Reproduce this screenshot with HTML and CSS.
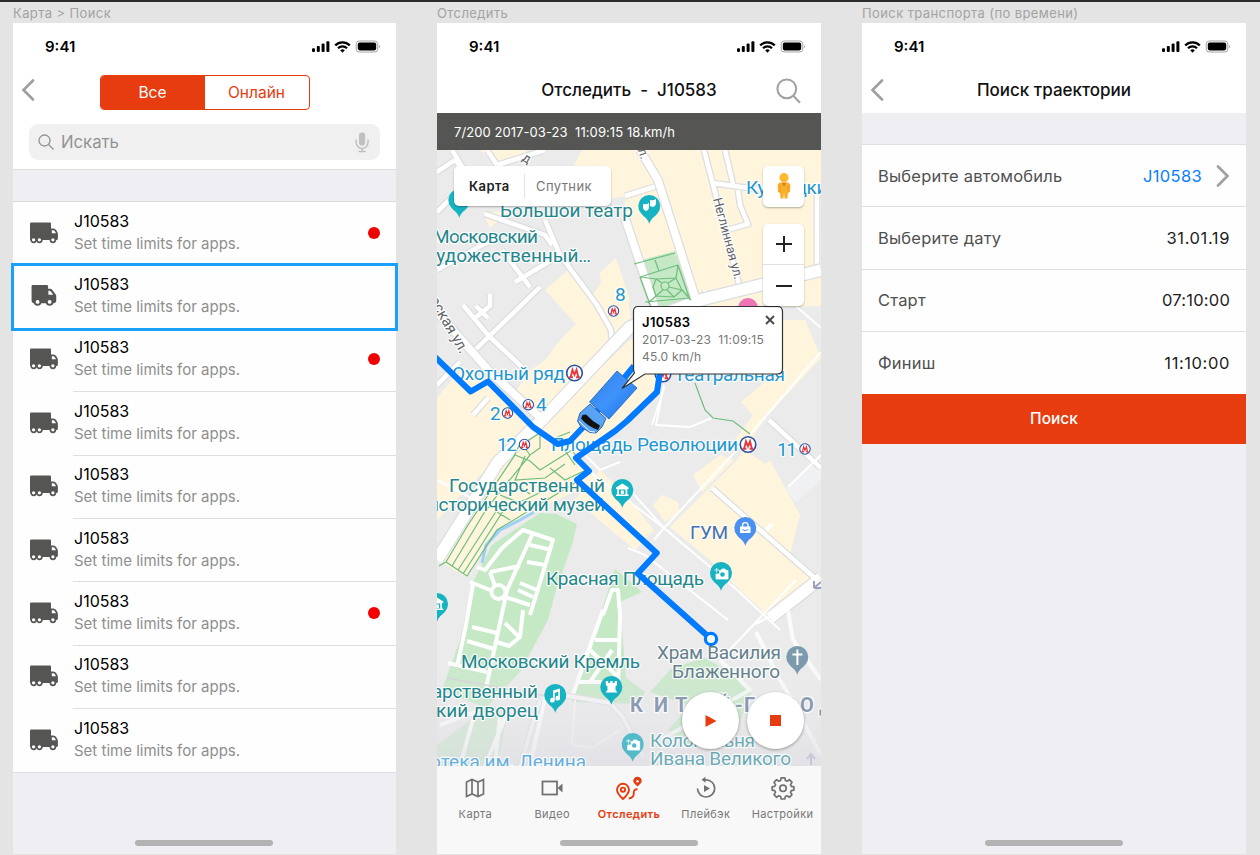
FILE: index.html
```html
<!DOCTYPE html>
<html lang="ru">
<head>
<meta charset="utf-8">
<title>Трекинг транспорта</title>
<link rel="stylesheet" href="styles.css">
</head>
<body>
<svg width="0" height="0" class="defs">
  <defs>
    <symbol id="status" viewBox="0 0 69 14">
      <rect x="0" y="8.3" width="3" height="3.7" rx="1"/><rect x="4.8" y="6" width="3" height="6" rx="1"/><rect x="9.6" y="3.6" width="3" height="8.4" rx="1"/><rect x="14.4" y="1.2" width="3" height="10.8" rx="1"/>
      <path d="M23.2 5.4a10.2 10.2 0 0 1 14.6 0" fill="none" stroke="#000" stroke-width="2.3"/>
      <path d="M26 8.3a6.3 6.3 0 0 1 9 0" fill="none" stroke="#000" stroke-width="2.1"/>
      <path d="M28.2 10.3a3.4 3.4 0 0 1 4.6 0L30.500 12.700z"/>
      <rect x="44.200" y="1" width="21.600" height="11" rx="3" fill="none" stroke="#a5a5a5"/>
      <rect x="45.800" y="2.600" width="18.400" height="7.800" rx="1.800"/>
      <path d="M67 5v3.200q1-.6 1-1.600t-1-1.600z" fill="#a5a5a5"/>
    </symbol>
    <symbol id="back" viewBox="0 0 14 22"><path d="M12 1.500 2.500 11 12 20.500" fill="none" stroke="#a0a0a0" stroke-width="2.700" stroke-linecap="round"/></symbol>
    <symbol id="truck" viewBox="0 0 28 21">
      <path fill="#555653" d="M1.200 0H20q1 0 1 1v5h2.200q2 0 3.100 1.800l1 1.800q.6 1 .6 2.200V16q0 1.500-1.500 1.500H1.500Q0 17.500 0 16V1.200Q0 0 1.200 0z"/>
      <g fill="#fff" stroke="#555653" stroke-width="1.700"><circle cx="3.600" cy="17.300" r="2.500"/><circle cx="9.400" cy="17.300" r="2.500"/><circle cx="22.900" cy="17.300" r="2.500"/></g>
      <path fill="#fff" d="M21.800 7.800h1.600q.8 0 1.300.8l1.300 2.200h-4.200z"/>
    </symbol>
    <symbol id="van" viewBox="0 0 28 23">
      <path fill="#555653" d="M2.400 0H17q1.300 0 1.300 1.300V4h2.200q1.300 0 2.200 1.100l3.200 4.200q.9 1 .9 2.300V16q0 3-3 3H4q-3 0-3-3V1.400Q1 0 2.400 0z"/>
      <g fill="#fff" stroke="#555653" stroke-width="2"><circle cx="7.300" cy="17.700" r="3"/><circle cx="19.900" cy="17.700" r="3"/></g>
      <path fill="#fff" d="M18.600 6h1.300q.7 0 1.200.7l2.500 3.400h-5z"/>
    </symbol>
    <symbol id="metro" viewBox="-9 -9 18 18" overflow="visible"><circle r="7.800" fill="#fff" stroke="#2a50a0" stroke-width="1.600"/><path d="M-5.300 4.200H-1.600M1.600 4.200H5.300M-3.800 4 -2 -3.200 0 1.800 2 -3.200 3.800 4" fill="none" stroke="#e8373b" stroke-width="1.900"/></symbol>
    <path id="pin" d="M0 18C-1.500 12.500-5 11.500-8.300 7.300A11 11 0 1 1 8.300 7.300C5 11.500 1.500 12.500 0 18z"/>
  </defs>
</svg>
<div class="board">
  <section class="frame">
    <h2 class="frame-label">Карта &gt; Поиск</h2>
    <div class="screen">
      <div class="status"><span>9:41</span><svg class="status-icons"><use href="#status"/></svg></div>
      <div class="nav nav-tabs">
        <svg class="back"><use href="#back"/></svg>
        <div class="segment"><span class="seg on">Все</span><span class="seg">Онлайн</span></div>
      </div>
      <div class="search-wrap"><div class="search">
        <svg width="17" height="17" viewBox="0 0 17 17" fill="none" stroke="#929292" stroke-width="1.300"><circle cx="6.500" cy="6.500" r="5.500"/><path d="M10.500 10.500l5 5"/></svg>
        <span>Искать</span>
        <svg width="14" height="21" viewBox="0 0 14 21"><rect x="4" y=".5" width="6.200" height="13" rx="3.100" fill="#c0c0c3"/><path d="M1.200 7.500v3a5.900 5.900 0 0 0 11.800 0v-3M7.100 16.500v3M3.500 19.600h7.200" fill="none" stroke="#c0c0c3" stroke-width="1.500"/></svg>
      </div></div>
      <ul class="list">
        <li class="item"><svg class="truck"><use href="#truck"/></svg><div class="txt"><b>J10583</b><span>Set time limits for apps.</span></div><i class="dot"></i></li>
        <li class="item selected"><svg class="truck"><use href="#van"/></svg><div class="txt"><b>J10583</b><span>Set time limits for apps.</span></div></li>
        <li class="item"><svg class="truck"><use href="#truck"/></svg><div class="txt"><b>J10583</b><span>Set time limits for apps.</span></div><i class="dot"></i></li>
        <li class="item"><svg class="truck"><use href="#truck"/></svg><div class="txt"><b>J10583</b><span>Set time limits for apps.</span></div></li>
        <li class="item"><svg class="truck"><use href="#truck"/></svg><div class="txt"><b>J10583</b><span>Set time limits for apps.</span></div></li>
        <li class="item"><svg class="truck"><use href="#truck"/></svg><div class="txt"><b>J10583</b><span>Set time limits for apps.</span></div></li>
        <li class="item"><svg class="truck"><use href="#truck"/></svg><div class="txt"><b>J10583</b><span>Set time limits for apps.</span></div><i class="dot"></i></li>
        <li class="item"><svg class="truck"><use href="#truck"/></svg><div class="txt"><b>J10583</b><span>Set time limits for apps.</span></div></li>
        <li class="item"><svg class="truck"><use href="#truck"/></svg><div class="txt"><b>J10583</b><span>Set time limits for apps.</span></div></li>
      </ul>
      <div class="home"></div>
    </div>
  </section>

  <section class="frame wide">
    <h2 class="frame-label">Отследить</h2>
    <div class="screen">
      <div class="status"><span>9:41</span><svg class="status-icons"><use href="#status"/></svg></div>
      <div class="nav">
        <h1>Отследить&nbsp; -&nbsp; J10583</h1>
        <svg class="find" width="25" height="26" viewBox="0 0 25 26" fill="none" stroke="#a0a0a0" stroke-width="2"><circle cx="10.800" cy="10.800" r="9.400"/><path d="M17.300 17.800l6.700 7"/></svg>
      </div>
      <div class="info">7/200 2017-03-23&nbsp; 11:09:15 18.km/h</div>
      <div class="map">
        <svg class="map-svg" viewBox="437 150 384 616" width="384" height="616">
          <defs>
            <linearGradient id="shade" x1="0" y1="0" x2="0" y2="1"><stop offset="0" stop-color="#eeeef2" stop-opacity="0"/><stop offset="1" stop-color="#dcdce3" stop-opacity=".6"/></linearGradient>
            <linearGradient id="cargo" x1="0" y1="0" x2="1" y2="1"><stop offset="0" stop-color="#2f7fe8"/><stop offset=".5" stop-color="#3f93fb"/><stop offset="1" stop-color="#1670e6"/></linearGradient>
          </defs>
          <rect x="437" y="150" width="384" height="616" fill="#ebebeb"/>
          <g fill="#fef5dc">
            <path d="M582 150H821V306L700 310 637 260 622 220 626 196 602 200 590 186 572 170z"/>
            <path d="M480 150H525L531 156 500 167 488 158z"/>
            <path d="M437 398 463 367 492 388 540 428 500 463 437 500z"/>
            <path d="M437 480 470 455 500 455 437 520z"/>
            <path d="M545 290 568 270 590 300 615 258 628 300 632 326 540 422 514 395 528 372 545 360 560 340 576 324z"/>
            <path d="M630 340 660 330V390L627 424 577 456 600 480 540 508 495 530 467 577 440 562 500 460 560 405z"/>
            <path d="M600 272 616 258 630 300 604 320z"/>
            <path d="M483 213 510 210 490 228z"/>
            <path d="M690 320H805L821 358 768 415 735 462 670 527 710 560 742 592 768 615 818 580 790 555 800 515 768 490 775 470 752 455 735 440 753 415 741 402 772 376 720 345z"/>
            <path d="M693 475 720 455 734 460 702 492z"/><path d="M653 505 662 495 678 502 680 512 665 522z"/>
            <path d="M600 470 630 500 654 530 635 550 575 500z"/><path d="M758 610H782L770 617z"/>
            <path d="M740 487 770 460 800 515 785 545z"/>
          </g>
          <path d="M625 215 640 265 652 312H634L612 240z" fill="#ebebeb"/>
          <path d="M785 489 813 463 821 468V480L796 502z" fill="#eff1f3"/>
          <g fill="#c5e8c5">
            <path d="M634 262 675 251 693 302 652 312z"/>
            <path d="M540 513 556 514 577 524 572 545 556 590 548 620 520 672 486 708 442 690 460 640 474 580 492 545z"/>
            <path d="M437 745 490 705 508 712 497 766H437z" opacity=".8"/>
            <path d="M615 569 642 592 620 602 626 678 645 692 640 704 572 702 598 622z"/>
            <path d="M650 692 672 668 705 658 735 675 752 690 735 735 690 748 668 730 690 706z"/>
          </g>
          <path d="M482 563 486 545 500 530 520 520 534 512" fill="none" stroke="#9fd0f5" stroke-width="3"/>
          <g fill="none" stroke-linejoin="round">
            <g stroke="#dcdde0" stroke-width="7">
              <path d="M437 172 455 160M437 212 470 180 452 150M455 160 478 190M487 150 497 165M497 165 545 150M437 270 495 238M502 250 530 287M485 214 545 235 552 245M515 282 560 255"/>
              <path d="M476 306 488 318M490 294V306L475 318M463 305 488 335 525 370M475 350 540 287M437 385 460 362M473 415 488 398"/>
              <path d="M545 220 560 255 597 305 611 330 612 345M704 150 742 296M725 150 733 184M713 183 762 190M738 190 740 205 748 224 727 230M817 190V275M625 196 657 186M705 300V290"/>
            </g>
            <g stroke="#fff" stroke-width="4.500">
              <path d="M437 172 455 160M437 212 470 180 452 150M455 160 478 190M487 150 497 165M497 165 545 150M437 270 495 238M502 250 530 287M485 214 545 235 552 245M515 282 560 255"/>
              <path d="M476 306 488 318M490 294V306L475 318M463 305 488 335 525 370M475 350 540 287M437 385 460 362M473 415 488 398"/>
              <path d="M545 220 560 255 597 305 611 330 612 345M704 150 742 296M725 150 733 184M713 183 762 190M738 190 740 205 748 224 727 230M817 190V275M625 196 657 186M705 300V290"/>
            </g>
            <g stroke="#dcdde0"><path stroke-width="10" d="M640 150 658 180 697 303M437 312 490 372 545 422M625 218 655 308"/><path stroke-width="14" d="M821 270 700 300 630 327 540 422 498 462 437 560M821 578 770 618"/><path stroke-width="7" d="M712 488 826 588M769 420 821 468"/></g>
            <g stroke="#fff"><path stroke-width="7.500" d="M640 150 658 180 697 303M437 312 490 372 545 422M625 218 655 308"/><path stroke-width="11.500" d="M821 270 700 300 630 327 540 422 498 462 437 560M821 578 770 618"/><path stroke-width="4.500" d="M712 488 826 588M766 530 772 524M769 420 821 468"/></g>
            <g stroke="#fff" stroke-width="2"><path d="M788 487 821 455M821 352 735 452 664 528 654 540M577 462 664 528 735 588 780 630M630 490 664 528M628 548 645 555 728 620M437 480 475 500M598 478 560 445M664 385 656 425 690 427 712 418M766 280 821 328M652 425 664 388M570 440 600 470 620 462"/><path d="M720 660 796 580M756 624 800 600"/></g>
            <g stroke="#fff" stroke-width="4"><path d="M477 567 485 570 502 548 523 530 553 540 530 615M533 533 507 590 485 693M490 572 520 566M527 562 545 565M520 583 537 590M518 590 533 597M490 572 495 586M505 597 530 605M470 582 490 590M473 585 466 625 457 667M530 545 552 550M472 627 497 633M467 641 494 649M523 610 520 637 509 646 497 642M505 623 520 638M448 663 487 672"/><circle cx="498.500" cy="592" r="7"/><path d="M603 615 612 590H618L620 615 618 693M603 610 572 697M595 640H620M590 650 617 676M612 650 590 682M577 682H617"/><path d="M440 725 475 712 460 766M510 706 485 766M545 698 530 766M500 715 495 766"/><path d="M788 610 793 640 821 680M756 632 780 680 792 700 821 755M720 660 750 690 660 740" opacity=".8"/></g>
            <path d="M557 694 610 703 623 717 643 757M540 700 520 767" stroke="#dcdde0" stroke-width="6"/><path d="M557 694 610 703 623 717 643 757M540 700 520 767" stroke="#f6f6f7" stroke-width="4"/>
            <path d="M575 700 572 745 592 748 620 730" stroke="#f6f6f6" stroke-width="2"/>
            <path d="M447 678 563 699" stroke="#d0d1d5" stroke-width="1.500"/>
          </g>
          <g fill="none" stroke="#6dbd7d" stroke-width="1.200">
            <path d="M634 264 675 253M640 277 678 265M645 302 690 298M640 277 652 310M678 265 690 300M656 279 676 278 682 290 674 297 656 296 653 287zM656 279 640 277M676 278 678 265M682 290 691 300M656 296 648 303M655 260 659 271"/><path d="M661 286a4 4 0 1 0 8 0a4 4 0 1 0-8 0M656 279 662 283M676 278 668 283M682 290 669 287M656 296 663 290M674 297 667 290"/>
            <path d="M439 566 446 562 467 576 497 530 580 480M446 562 468 525 515 455M452 566 487 508 530 455M458 570 497 510M463 574 505 508M515 455 530 461 540 470 572 450 586 470 565 480 550 468M525 456 515 480 545 478 565 464M487 508 525 500 545 490M500 495 520 503M508 480 530 494M497 512 510 520M550 440 570 432M522 440 513 458M527 441 540 433 540 448 530 455 524 447M556 438 575 465M695 383 705 410 713 418 733 421 750 434"/>
          </g>
          <circle cx="748" cy="308" r="10" fill="#ee74b6"/>
          <path d="M814 588 821 582M814 588V581M814 588H821" stroke="#9aa0bd" stroke-width="2" fill="none"/>
          <path d="M811 765V756M807 759 811 754 815 759" stroke="#a9a9c8" stroke-width="2" fill="none"/>
          <rect x="437" y="640" width="384" height="126" fill="url(#shade)"/>
          <g class="lbl">
            <g fill="#5f6368" font-size="13"><text transform="translate(713 199) rotate(75)" textLength="84">Неглинная ул.</text><text transform="translate(425 293) rotate(60)" font-size="15" textLength="71">ерская ул.</text><text x="524" y="164" transform="rotate(30 530 157)">д</text><text x="638" y="157" transform="rotate(70 643 153)">л.</text></g>
            <g fill="#23868c">
              <text x="500" y="217" textLength="133">Большой театр</text><text x="433" y="243" textLength="105">Московский</text><text x="427" y="262" textLength="164">художественный…</text>
              <text x="449" y="492" textLength="156">Государственный</text><text x="428" y="511" textLength="177">исторический музей</text>
              <text x="546" y="585" textLength="158">Красная Площадь</text><text x="461" y="668" textLength="179">Московский Кремль</text>
              <text x="384" y="698" textLength="154">Государственный</text><text x="538" y="717" text-anchor="end">вский дворец</text>
            </g>
            <g fill="#1f97d0"><text x="746" y="194" textLength="92">Кузнецкий</text><text x="615" y="301">8</text><text x="452" y="380" textLength="113">Охотный ряд</text><text x="536" y="411">4</text><text x="490" y="420">2</text><text x="497" y="451" textLength="20">12</text><text x="551" y="451" textLength="187">Площадь Революции</text><text x="777" y="456" textLength="20">11</text><text x="674" y="381" textLength="111">Театральная</text></g>
            <text x="690" y="539" textLength="38" fill="#4570b0">ГУМ</text>
            <g fill="#64808c"><text x="657" y="659" textLength="124">Храм Василия</text><text x="672" y="678" textLength="108">Блаженного</text></g>
            <text x="630 654 675 694 716 735 744 761 783 800 819" y="712" fill="#8c9bb3" font-size="20" font-weight="700">КИТАЙ-ГОРОД</text>
            <g fill="#6cabb6"><text x="650" y="747" textLength="105">Колокольня</text><text x="650" y="765" textLength="141">Ивана Великого</text></g>
            <text x="586" y="768" fill="#68afdd" text-anchor="end">Библиотека им. Ленина</text>
          </g>
          <use href="#metro" x="565.500" y="364" width="18" height="18"/><use href="#metro" x="739" y="435.500" width="18" height="18"/><use href="#metro" x="654" y="365" width="18" height="18"/>
          <use href="#metro" x="607.500" y="305" width="12" height="12"/><use href="#metro" x="522.300" y="398.700" width="12" height="12"/><use href="#metro" x="501.500" y="407" width="12" height="12"/><use href="#metro" x="518.500" y="438.500" width="12" height="12"/><use href="#metro" x="799" y="443" width="12" height="12"/>
          <g fill="#17b3c3">
            <use href="#pin" x="459.300" y="200"/><use href="#pin" x="649.300" y="206"/><use href="#pin" x="622.300" y="490"/><use href="#pin" x="721" y="573"/><use href="#pin" x="437" y="604"/><use href="#pin" x="555.300" y="695"/><use href="#pin" x="611.300" y="687"/><use href="#pin" x="632.700" y="744" fill="#52bac9"/><use href="#pin" x="745.300" y="528" fill="#4a90f0"/><use href="#pin" x="797.300" y="657" fill="#7b9aad"/>
          </g>
          <g fill="#fff">
            <path d="M643 204q3 1 6-1v5q-1 3-3 3t-3-3zM650 200q3 1 6-1v5q-1 3-3 3l-3-1z"/>
            <path fill-rule="evenodd" d="M616 487.500 622.300 483.500 628.600 487.500V489H627.300V494.500H628.500V496H616V494.500H617.200V489H616zM619 489.500V494.500H625.500V489.500z"/><path d="M620.800 490.500H623.800V494H620.800z"/>
            <path fill-rule="evenodd" d="M430.700 601.500 437 597.500 443.300 601.500V603H442V608.500H443.200V610H430.700V608.500H432V603H430.700zM433.500 603.500V608.500H440.300V603.500z"/><path d="M436 604.500h3v3.500h-3z"/>
            <path d="M740 526.500H750.500V533H740z"/><path d="M742.500 527V525.500a2.800 2.800 0 0 1 5.600 0V527" fill="none" stroke="#fff" stroke-width="1.300"/>
            <path d="M719.500 570.500h1.500l1-1.500h3l1 1.500h2v8.500h-12v-5h3.500zM714.500 570h4.500M716.700 568v4.500" stroke="#fff" stroke-width=".8"/><path d="M631.200 741.500h1.500l1-1.500h3l1 1.500h2v8.500h-12v-5h3.500zM626.200 741h4.500M628.400 739v4.500" stroke="#fff" stroke-width=".8"/>
            <path d="M605.800 681h2.400v2h2v-2h2.400v2h2v-2h2.400v4l-1.500 1.500v3.500l2 2.500h-12l2-2.500v-3.500L605.800 685z"/>
            <path d="M553 690.500 560 688.500V698a2.300 2.300 0 1 1-1.700-2V691.800L554.700 693V700a2.300 2.300 0 1 1-1.700-2z"/>
            <path d="M796.400 649.500h2v4h4v2h-4v9.500h-2v-9.500h-4v-2h4z"/>
          </g>
          <circle cx="722.500" cy="574.500" r="2.300" fill="#17b3c3"/><circle cx="634.200" cy="745.500" r="2.300" fill="#52bac9"/><path d="M742.500 529.500q2.800 2.500 5.600 0" stroke="#4a90f0" fill="none"/>
          <g fill="none" stroke="#007aff" stroke-width="6" stroke-linejoin="round">
            <path d="M434 356 470.700 391.500 488 381.500 533 427 557.700 444 570 441 590 420 634 366"/>
            <path d="M660 372 657 392 627 421 615 431 576 458 589 471 577 480 656.700 553 637.700 573.500 711 639"/>
            <circle cx="711" cy="639" r="5.600" fill="#fff" stroke-width="3.200"/>
          </g>
          <path d="M617 371 637 388 609 419 589.500 402z" fill="url(#cargo)" stroke="#1b5fc0" stroke-width=".8"/>
          <path d="M590 404 606 418.500 602 427 596 433 590 432.500 581 427 577.500 421 580 413z" fill="#58a3f4" stroke="#1b4fa0" stroke-width=".8"/>
          <path d="M582.500 415 586 414.500Q592 421 600 425.500L598 430Q587 426 581 418.500z" fill="#111"/>
          <path d="M579 421 590 431.500 595 432" fill="none" stroke="#f3f8ff"/>
          <path d="M638 306.500H777.500Q782.500 306.500 782.500 311.500V369Q782.500 374 777.500 374H645L622 388.500 634.500 373Q633.500 371 633.500 369V311.500Q633.500 306.500 638 306.500z" fill="#fff" stroke="#333" stroke-width="1.200"/>
        </svg>
        <div class="popup">
          <b>J10583</b><span>2017-03-23&nbsp; 11:09:15</span><span>45.0 km/h</span>
          <svg class="close" width="10" height="10" viewBox="0 0 10 10"><path d="M1 1l8 8M9 1 1 9" stroke="#4a4a4a" stroke-width="1.900"/></svg>
        </div>
        <div class="maptype"><b>Карта</b><span>Спутник</span></div>
        <div class="pegman"><svg width="16" height="27" viewBox="0 0 16 27"><circle cx="8" cy="4.700" r="4.600" fill="#fcb92c"/><path d="M3.500 9.500h9l2 2.500-.5 7-2 1-.5 5.500H8.600L8 20l-.6 5.500H4.500L4 20l-2-1-.5-7z" fill="#fbb02a"/><path d="M5.500 9.800h5L8 13.800z" fill="#d9822b"/><path d="M4 12v7M12 12v7" stroke="#e69a25"/></svg></div>
        <div class="zoomer"><i class="plus"></i><i class="minus"></i></div>
        <div class="player">
          <div class="round"><svg width="12" height="14" viewBox="0 0 12 14"><path d="M.5 1 11.500 7 .5 13z" fill="#e73c10"/></svg></div>
          <div class="round"><svg width="11" height="11"><rect width="11" height="11" fill="#e73c10"/></svg></div>
        </div>
      </div>
      <nav class="tabbar">
        <div class="tab"><svg width="24" height="24" viewBox="0 0 24 24" fill="none" stroke="#717171" stroke-width="1.700"><path d="M3.500 6 9 3.500 15 6 20.500 3.500V18L15 20.500 9 18 3.500 20.500zM9 3.500V18M15 6V20.500"/></svg><span>Карта</span></div>
        <div class="tab"><svg width="24" height="24" viewBox="0 0 24 24" fill="none" stroke="#717171" stroke-width="1.800"><rect x="2.500" y="5.500" width="14.500" height="13"/><path d="M17.500 12 22.500 7.500V16.500z" fill="#717171" stroke="none"/></svg><span>Видео</span></div>
        <div class="tab on"><svg width="26" height="24" viewBox="0 0 26 24" fill="none" stroke="#e73c10" stroke-width="1.900"><path d="M7 23Q1 17.500 1 13.800a6 6 0 0 1 12 0Q13 17.500 7 23z"/><circle cx="7" cy="13.700" r="2.100"/><path d="M21.500 10.500Q17.300 7 17.300 5a4.200 4.200 0 0 1 8.400 0Q25.700 7 21.500 10.500z" fill="#e73c10" stroke="none"/><circle cx="21.500" cy="5.200" r="1.200" fill="#fff" stroke="none"/><path d="M21.500 13.200q-4 .2-3.700 3.500.4 5.300-5 5.800"/></svg><span>Отследить</span></div>
        <div class="tab"><svg width="24" height="24" viewBox="0 0 24 24" fill="none" stroke="#717171" stroke-width="1.700"><path d="M9.500 3.800H12A8.600 8.600 0 1 1 3.500 12.500"/><path d="M11.500 .8 7.500 3.800 11.500 6.800zM10 9l6 3.500-6 3.500z" fill="#717171" stroke="none"/></svg><span>Плейбэк</span></div>
        <div class="tab"><svg width="24" height="24" viewBox="0 0 24 24" fill="none" stroke="#717171" stroke-width="1.700" stroke-linejoin="round"><path d="M10.200 1.800h3.600l.6 2.700 1.700.7 2.300-1.500 2.600 2.600-1.500 2.300.7 1.700 2.700.6v3.200l-2.700.6-.7 1.700 1.500 2.300-2.600 2.600-2.300-1.500-1.700.7-.6 2.500h-3.600l-.6-2.500-1.700-.7-2.300 1.500L3 18.700l1.500-2.300-.7-1.700-2.700-.6v-3.200l2.700-.6.7-1.700L3 6.300l2.600-2.600 2.300 1.500 1.700-.7z"/><circle cx="12" cy="12.300" r="3.200"/></svg><span>Настройки</span></div>
      </nav>
      <div class="home"></div>
    </div>
  </section>

  <section class="frame wide">
    <h2 class="frame-label">Поиск транспорта (по времени)</h2>
    <div class="screen">
      <div class="status"><span>9:41</span><svg class="status-icons"><use href="#status"/></svg></div>
      <div class="nav"><svg class="back"><use href="#back"/></svg><h1>Поиск траектории</h1></div>
      <div class="form">
        <div class="field"><span>Выберите автомобиль</span><b class="link">J10583</b><svg class="back fwd"><use href="#back"/></svg></div>
        <div class="field"><span>Выберите дату</span><b class="loose">31.01.19</b></div>
        <div class="field"><span>Старт</span><b>07:10:00</b></div>
        <div class="field"><span>Финиш</span><b class="loose">11:10:00</b></div>
      </div>
      <div class="submit">Поиск</div>
      <div class="home"></div>
    </div>
  </section>
</div>
</body>
</html>
```
FILE: styles.css
```css
* { box-sizing: border-box; }
body { margin: 0; height: 855px; overflow: hidden; background: #e4e4e4; font-family: Inter, "Liberation Sans", sans-serif; border-top: 2px solid #2c2a2b; }
h1, h2, ul { margin: 0; padding: 0; list-style: none; font-weight: 400; }
b { font-weight: 400; }
.defs { position: absolute; }
.board { display: flex; gap: 41px; padding-left: 13px; }
.frame { width: 383px; flex: none; }
.wide { width: 384px; }
.frame-label { height: 21px; padding-top: 3px; font-size: 13px; line-height: 17px; letter-spacing: .4px; color: #a3a3a3; white-space: nowrap; }
.screen { height: 831px; background: #efeef3; position: relative; display: flex; flex-direction: column; }
.status { height: 46px; background: #fff; display: flex; justify-content: space-between; align-items: center; padding: 1px 15px 0 32px; font-size: 15px; font-weight: 600; flex: none; }
.status-icons { width: 69px; height: 14px; }
.nav { height: 44px; background: #fff; flex: none; display: flex; align-items: center; position: relative; justify-content: center; }
.nav h1 { font-size: 17px; font-weight: 500; color: #111; white-space: nowrap; padding-bottom: 2px; }
.back { width: 14px; height: 22px; }
.nav .back { position: absolute; left: 8px; top: 10px; }
.find { position: absolute; right: 20px; top: 9px; }
.segment { width: 210px; height: 35px; border: 1px solid #e73c10; border-radius: 4px; display: flex; overflow: hidden; margin: 2px 0 0 0; }
.seg { flex: 1; display: flex; align-items: center; justify-content: center; font-size: 15.500px; color: #e73c10; }
.seg.on { background: #e73c10; color: #fff; }
.search-wrap { height: 57px; flex: none; background: #fff; border-bottom: 1px solid #dededf; padding: 11px 16px 0; }
.search { height: 36px; border-radius: 9px; background: #f0f0f0; display: flex; align-items: center; padding: 0 11px 0 9px; }
.search span { flex: 1; margin-left: 6px; font-size: 16.700px; color: #929292; }
.list { margin-top: 31px; border-top: 1px solid #dadadc; }
.item { height: 63.400px; background: #fefefe; display: flex; align-items: center; padding: 0 16px 0 17px; position: relative; }
.item::after { content: ""; position: absolute; left: 60px; right: 0; bottom: 0; height: 1px; background: #dedede; }
.item:last-child::after { left: 0; }
.truck { width: 28px; height: 22px; margin-top: -2px; }
.txt { flex: 1; margin: -3px 0 0 16px; display: flex; flex-direction: column; }
.txt b { font-size: 16px; line-height: 22px; color: #000; }
.txt span { font-size: 15px; line-height: 23px; color: #8e8e8e; }
.dot { width: 12px; height: 12px; margin-top: -2px; border-radius: 50%; background: #f20000; }
.selected::before { content: ""; position: absolute; left: -2px; right: -2px; top: -2px; bottom: -2px; border: 3px solid #18a0fb; z-index: 2; }
.home { position: absolute; left: 50%; margin-left: -69.500px; bottom: 8px; width: 138px; height: 6px; border-radius: 3px; background: #b3b3b3; }
.info { height: 37px; flex: none; background: #555653; color: #fff; padding: 1px 17px 0; font-size: 13px; letter-spacing: .07px; display: flex; align-items: center; }
.map { height: 616px; flex: none; position: relative; overflow: hidden; }
.map-svg { display: block; }
.lbl { font-family: Roboto, sans-serif; font-size: 19px; }
.lbl text { paint-order: stroke; stroke: rgba(255,255,255,.85); stroke-width: 2.500px; stroke-linejoin: round; }
.popup { position: absolute; left: 205px; top: 164px; display: flex; flex-direction: column; width: 133px; }
.popup b { font-size: 13px; font-weight: 600; line-height: 17px; letter-spacing: .35px; color: #000; }
.popup span { font-size: 12px; line-height: 17px; letter-spacing: .22px; color: #777; }
.close { position: absolute; right: 0; top: 1px; }
.maptype { position: absolute; left: 17px; top: 16px; width: 157px; height: 40px; background: #fff; border-radius: 5px; box-shadow: 0 1px 2px rgba(0,0,0,.3); display: flex; align-items: center; font-size: 13px; letter-spacing: .4px; }
.maptype b { width: 71px; height: 24px; line-height: 24px; border-right: 1px solid #e2e2e2; padding-left: 15px; font-weight: 600; color: #222; }
.maptype span { padding-left: 11px; color: #777; }
.pegman, .zoomer { position: absolute; right: 17px; width: 41px; background: #fff; border-radius: 5px; box-shadow: 0 1px 2px rgba(0,0,0,.3); }
.pegman { top: 16px; height: 41px; display: flex; align-items: center; justify-content: center; }
.zoomer { top: 74px; height: 82px; display: grid; grid-template-rows: 1fr 1fr; }
.zoomer i { display: block; background: linear-gradient(#222, #222) center / 16px 2px no-repeat; }
.zoomer .plus { background: linear-gradient(#222, #222) center / 16px 2px no-repeat, linear-gradient(#222, #222) center / 2px 16px no-repeat; border-bottom: 1px solid #e2e2e2; }
.player { position: absolute; left: 245px; top: 542px; display: flex; gap: 8px; }
.round { width: 57px; height: 57px; border-radius: 50%; background: #fff; box-shadow: 0 1px 3px rgba(0,0,0,.35); display: flex; align-items: center; justify-content: center; }
.tabbar { flex: 1; background: #f7f8f7; display: grid; grid-template-columns: repeat(5, 1fr); }
.tab { display: flex; flex-direction: column; align-items: center; padding-top: 10px; font-size: 11px; letter-spacing: .4px; color: #777; }
.tab span { margin-top: 7px; line-height: 14px; }
.tab.on { color: #e73c10; font-weight: 600; }
.form { margin-top: 31px; }
.field { height: 62.400px; border-top: 1px solid #dfdfe0; background: #fefefe; display: flex; align-items: center; padding: 0 16px 0 16px; font-size: 16.500px; letter-spacing: .2px; color: #505050; }
.field span { flex: 1; }
.field b { color: #1d1d1d; }
.field .link { color: #087dff; letter-spacing: .35px; }
.field .loose { letter-spacing: .6px; }
.fwd { transform: scaleX(-1); margin-left: 14px; }
.submit { height: 50px; background: #e73c10; color: #fff; display: flex; align-items: center; justify-content: center; font-size: 15.500px; font-weight: 500; }
```
